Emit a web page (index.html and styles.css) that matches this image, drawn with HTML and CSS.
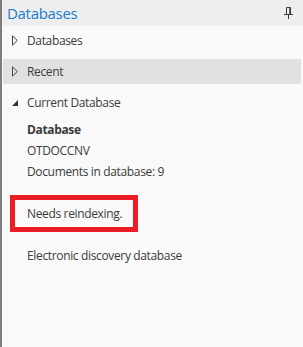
FILE: index.html
```html
<!DOCTYPE html>
<html lang="en">
<head>
    <meta charset="UTF-8">
    <meta name="viewport" content="width=device-width, initial-scale=1.0">
    <title>Databases</title>
    <link rel="stylesheet" href="styles.css">
</head>
<body>
    <div class="pane">
        <div class="pane-header">
            <span class="pane-title">Databases</span>
            <!-- pin button -->
            <svg class="pin" width="9" height="12" viewBox="0 0 9 12">
                <path d="M2.5 0.5 H6.5 M2.5 0.5 V7 M6 0.5 V7 M0 7.5 H9 M4.5 7.5 V12" stroke="#3a3a3a" stroke-width="1" fill="none"/>
                <rect x="5.5" y="0.5" width="1.5" height="7" fill="#3a3a3a"/>
            </svg>
        </div>

        <div class="group">
            <div class="group-row">
                <svg class="arrow" width="6" height="11" viewBox="0 0 6 11">
                    <path d="M0.5 0.8 L5.3 5.5 L0.5 10.2 Z" stroke="#444" stroke-width="1" fill="none"/>
                </svg>
                <span>Databases</span>
            </div>
            <div class="group-row selected">
                <svg class="arrow" width="6" height="11" viewBox="0 0 6 11">
                    <path d="M0.5 0.8 L5.3 5.5 L0.5 10.2 Z" stroke="#444" stroke-width="1" fill="none"/>
                </svg>
                <span>Recent</span>
            </div>
            <div class="group-row">
                <svg class="arrow open" width="6" height="6" viewBox="0 0 6 6">
                    <polygon points="6,0 6,6 0,6" fill="#333"/>
                </svg>
                <span>Current Database</span>
            </div>
        </div>

        <div class="details">
            <div class="label">Database</div>
            <div>OTDOCCNV</div>
            <div>Documents in database: 9</div>

            <div class="warning">Needs reindexing.</div>

            <div class="type">Electronic discovery database</div>
        </div>
    </div>
</body>
</html>
```

FILE: styles.css
```css
html, body {
    margin: 0;
    padding: 0;
    height: 100%;
}
body {
    font-family: "Open Sans", "Noto Sans", sans-serif;
    font-size: 12px;
    letter-spacing: -0.35px;
    color: #3b3b3b;
    background-color: #f9f9f9;
}
.pane {
    min-height: 100%;
    border-left: 2px solid #7d7d7d;
    box-sizing: border-box;
}
.pane-header {
    height: 26px;
    display: flex;
    align-items: center;
    justify-content: space-between;
    background-color: #eeeeee;
    padding: 0 10px 0 5px;
}
.pane-title {
    color: #1a7bd0;
    font-size: 15px;
    letter-spacing: -0.3px;
    line-height: 26px;
    margin-top: -1px;
}
.pin {
    display: block;
    margin-top: -1px;
}
.group {
    display: flex;
    flex-direction: column;
    gap: 6px;
    padding: 2px 0 4px 0;
}
.group-row {
    height: 25px;
    display: flex;
    align-items: center;
    margin: 0 2px 0 1px;
    padding-left: 9px;
}
.group-row.selected {
    background-color: #e1e1e1;
}
.arrow {
    display: block;
    margin-right: 9px;
}
.arrow.open {
    margin-top: 1px;
}
.details {
    padding-left: 25px;
    line-height: 21px;
}
.label {
    font-weight: bold;
}
.warning {
    width: 128px;
    box-sizing: border-box;
    margin: 13px 0 13px -17px;
    padding: 3px 0 3px 12px;
    border: 5px solid #ed1c24;
}
```
